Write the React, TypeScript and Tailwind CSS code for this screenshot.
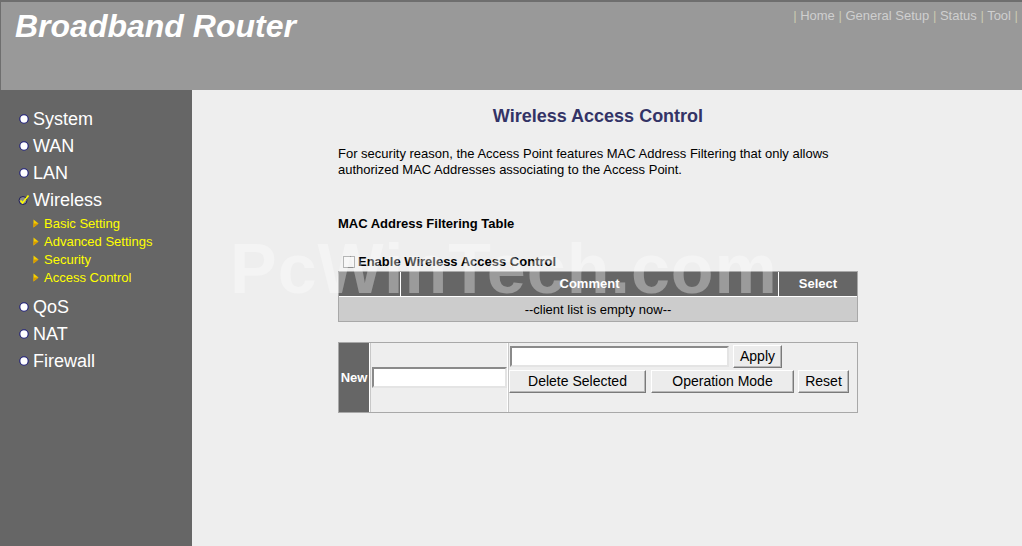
import React from "react";

const font = { fontFamily: '"Liberation Sans", Arial, sans-serif' };

function Bullet({ checked }: { checked?: boolean }) {
  if (checked) {
    return (
      <svg width="12" height="12" viewBox="0 0 12 12" className="mr-[3px]">
        <circle cx="5" cy="6.5" r="4" fill="#8a8a8a" stroke="#20205a" strokeWidth="1" />
        <path d="M2.5 6.5 L4.5 9 L10.5 1.5" fill="none" stroke="#ffff00" strokeWidth="1.6" />
      </svg>
    );
  }
  return (
    <svg width="12" height="12" viewBox="0 0 12 12" className="mr-[3px]">
      <circle cx="6" cy="6" r="4.2" fill="#ffffff" stroke="#1a1a7a" strokeWidth="1.1" />
    </svg>
  );
}

function Arrow() {
  return (
    <svg width="6" height="9" viewBox="0 0 6 9" className="mr-[5px]">
      <path d="M0.5 0.5 L5.5 4.5 L0.5 8.5 Z" fill="#f5d000" />
      <path d="M0.5 4.5 L5.5 4.5 L0.5 8.5 Z" fill="#d89a00" />
    </svg>
  );
}

function MainItem({ label, checked }: { label: string; checked?: boolean }) {
  return (
    <div className="h-[27px] flex items-center pl-[18px] text-white text-[18px] leading-none">
      <Bullet checked={checked} />
      <span>{label}</span>
    </div>
  );
}

function SubItem({ label }: { label: string }) {
  return (
    <div className="h-[18px] flex items-center pl-[33px] text-[#ffff00] text-[13px] leading-none">
      <Arrow />
      <span>{label}</span>
    </div>
  );
}

function Btn({ children, w }: { children: React.ReactNode; w: string }) {
  return (
    <button
      className={`${w} h-[23px] bg-[#ececec] text-black text-[14px] leading-none border border-t-white border-l-white border-r-[#7a7a7a] border-b-[#7a7a7a] shadow-[inset_-1px_-1px_0_#b8b8b8]`}
      style={font}
    >
      {children}
    </button>
  );
}

export default function App() {
  return (
    <div className="relative w-[1022px] h-[546px] overflow-hidden bg-[#eeeeee]" style={font}>
      {/* Header */}
      <div className="h-[90px] bg-[#999999] border-t-2 border-l border-[#6e6e6e] flex justify-between">
        <div className="pl-[14px] pt-[6px] text-white text-[32px] font-bold italic leading-[36px]">
          Broadband Router
        </div>
        <div className="pr-[4px] pt-[6px] text-[13px] leading-[16px] text-[#cfcfcf] whitespace-pre">
          <span className="text-[#c9c9b0]">| </span>Home<span className="text-[#c9c9b0]"> | </span>General Setup
          <span className="text-[#c9c9b0]"> | </span>Status<span className="text-[#c9c9b0]"> | </span>Tool
          <span className="text-[#c9c9b0]"> |</span>
        </div>
      </div>

      <div className="flex h-[456px]">
        {/* Sidebar */}
        <div className="w-[192px] bg-[#666666] pt-[15px]">
          <MainItem label="System" />
          <MainItem label="WAN" />
          <MainItem label="LAN" />
          <MainItem label="Wireless" checked />
          <div className="pt-[1px]">
            <SubItem label="Basic Setting" />
            <SubItem label="Advanced Settings" />
            <SubItem label="Security" />
            <SubItem label="Access Control" />
          </div>
          <div className="h-[7px]" />
          <MainItem label="QoS" />
          <MainItem label="NAT" />
          <MainItem label="Firewall" />
        </div>

        {/* Content */}
        <div className="flex-1 bg-[#eeeeee] pl-[146px] pt-[15px]">
          <div className="w-[520px]">
            <div className="h-[22px] leading-[22px] text-center text-[18px] font-bold text-[#333366]">
              Wireless Access Control
            </div>
            <p className="mt-[19px] text-[13px] leading-[16px] text-black">
              For security reason, the Access Point features MAC Address Filtering that only allows authorized MAC
              Addresses associating to the Access Point.
            </p>
            <div className="mt-[38px] text-[13px] leading-[16px] font-bold text-black">MAC Address Filtering Table</div>
            <div className="mt-[22px] h-[16px] flex items-center text-[13px] font-bold text-black">
              <span className="ml-[5px] mr-[3px] w-[12px] h-[12px] border border-[#8e8f8f] bg-[#f4f4f4]" />
              Enable Wireless Access Control
            </div>

            {/* Table 1 */}
            <div className="mt-[1px] border border-[#a8a8a8] bg-white grid grid-cols-[61px_377px_78px] gap-px text-[13px]">
              <div className="h-[24px] bg-[#666666]" />
              <div className="h-[24px] bg-[#666666] text-white font-bold flex items-center justify-center">Comment</div>
              <div className="h-[24px] bg-[#666666] text-white font-bold flex items-center justify-center">Select</div>
              <div className="col-span-3 h-[24px] bg-[#cccccc] text-black flex items-center justify-center pt-[1px]">
                --client list is empty now--
              </div>
            </div>

            {/* Table 2 */}
            <div className="mt-[20px] border border-[#a8a8a8] bg-white grid grid-cols-[30px_137px_349px] gap-px">
              <div className="h-[69px] bg-[#666666] text-white font-bold text-[13px] flex items-center justify-center">
                New
              </div>
              <div className="h-[69px] bg-[#eeeeee] border-l border-[#c8c8c8] flex items-center pl-[1px]">
                <div className="w-[135px] h-[21px] bg-white border-2 border-t-[#8a8a8a] border-l-[#8a8a8a] border-r-[#e4e4e4] border-b-[#e4e4e4]" />
              </div>
              <div className="h-[69px] bg-[#eeeeee] border-l border-[#c8c8c8] pt-[1px]">
                <div className="flex items-center">
                  <div className="ml-[1px] w-[219px] h-[21px] bg-white border-2 border-t-[#8a8a8a] border-l-[#8a8a8a] border-r-[#e4e4e4] border-b-[#e4e4e4]" />
                  <div className="ml-[4px]">
                    <Btn w="w-[49px]">Apply</Btn>
                  </div>
                </div>
                <div className="flex items-center mt-[1px]">
                  <Btn w="w-[137px]">Delete Selected</Btn>
                  <div className="ml-[5px]">
                    <Btn w="w-[143px]">Operation Mode</Btn>
                  </div>
                  <div className="ml-[4px]">
                    <Btn w="w-[51px]">Reset</Btn>
                  </div>
                </div>
              </div>
            </div>
          </div>
        </div>
      </div>

      {/* Watermark */}
      <div className="pointer-events-none absolute left-[230px] top-[234px] text-[70px] leading-[70px] font-bold text-white/35 tracking-[1px] select-none">
        PcWinTech.com
      </div>
    </div>
  );
}
